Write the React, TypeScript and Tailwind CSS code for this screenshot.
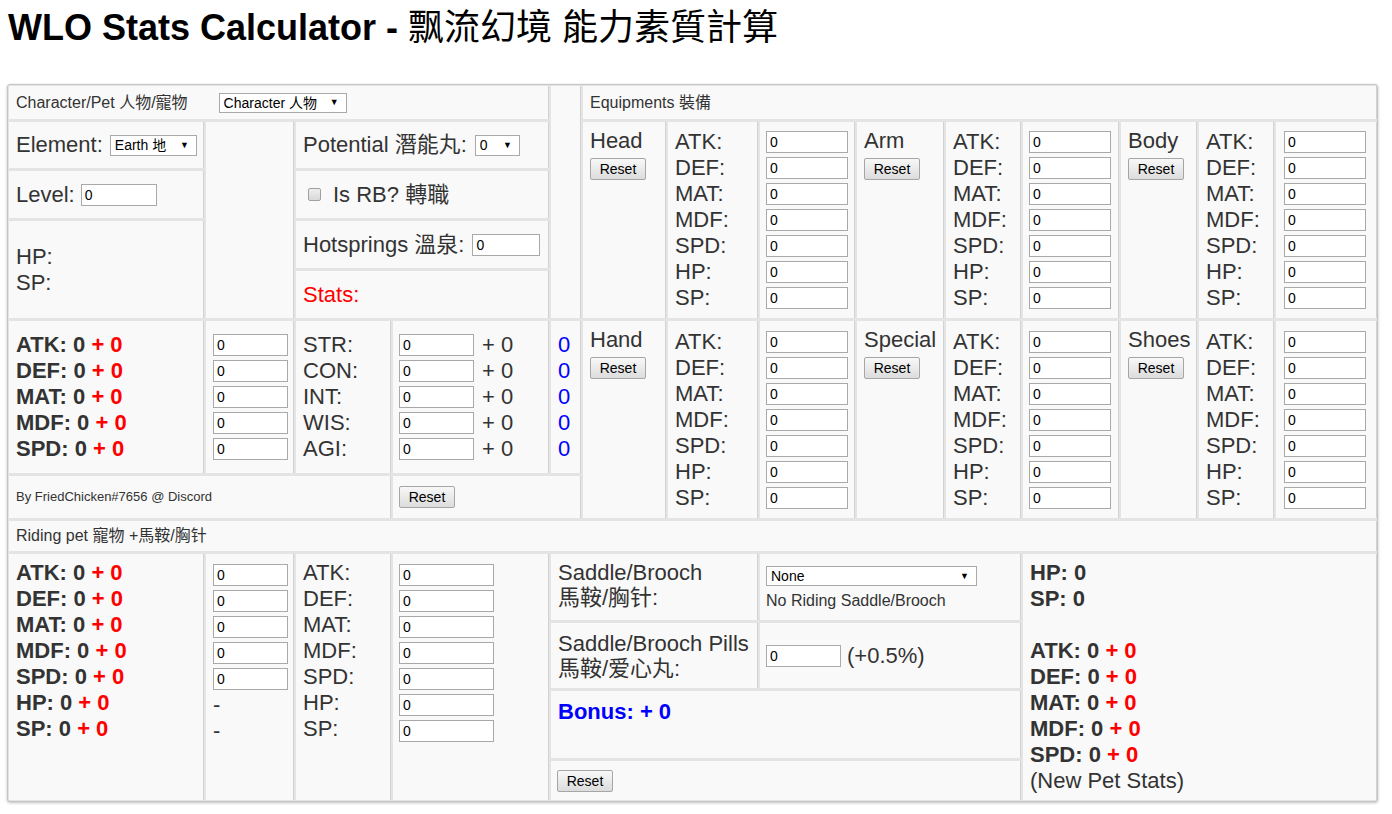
import React from "react";

const STATS5 = ["ATK", "DEF", "MAT", "MDF", "SPD"];
const STATS7 = ["ATK", "DEF", "MAT", "MDF", "SPD", "HP", "SP"];
const ATTRS = ["STR", "CON", "INT", "WIS", "AGI"];

// every table cell shares the same light fill and the darker right edge
const cell = "bg-[#f9f9f9] shadow-[1px_0_0_#d2d2d2]";

function Field({ w = "w-[75px]" }: { w?: string }) {
  return (
    <input
      readOnly
      value="0"
      className={`${w} h-[22px] border border-[#a9a9a9] bg-white px-[3px] text-[14px] leading-[20px] text-black outline-none`}
    />
  );
}

function Dropdown({ text, w, h = "h-[21px]" }: { text: string; w: string; h?: string }) {
  return (
    <span
      className={`${w} ${h} inline-flex items-center justify-between border border-[#a9a9a9] bg-white pl-[4px] pr-[7px] text-[14px] leading-none text-black`}
    >
      <span>{text}</span>
      <span className="text-[9px]">▼</span>
    </span>
  );
}

function ResetButton() {
  return (
    <button className="h-[22px] w-[56px] rounded-[2px] border border-[#a6a6a6] bg-linear-to-b from-[#f8f8f8] to-[#dcdcdc] text-[14px] leading-none text-black">
      Reset
    </button>
  );
}

function BoldStat({ name }: { name: string }) {
  return (
    <div className="h-[26px] font-bold">
      {name}: 0 <span className="text-[#ff0000]">+ 0</span>
    </div>
  );
}

function Equip({
  name,
  a,
  b,
  c,
  pad,
}: {
  name: string;
  a: string;
  b: string;
  c: string;
  pad: string;
}) {
  return (
    <>
      <div className={`${cell} ${a} px-[7px] pt-[6px]`}>
        <div className="leading-[26px]">{name}</div>
        <div className="mt-[4px] flex">
          <ResetButton />
        </div>
      </div>
      <div className={`${cell} ${b} flex flex-col justify-center pl-[7px] leading-[26px]`}>
        {STATS7.map((s) => (
          <div key={s}>{s}:</div>
        ))}
      </div>
      <div className={`${cell} ${c} flex flex-col justify-center ${pad}`}>
        {STATS7.map((s) => (
          <div key={s} className="flex h-[26px] items-center">
            <Field w="w-[82px]" />
          </div>
        ))}
      </div>
    </>
  );
}

export default function App() {
  return (
    <div className="min-h-screen bg-white font-['Liberation_Sans','Noto_Sans_CJK_TC',sans-serif] text-[22px] leading-[26px] text-[#333]">
      <h1 className="m-0 px-[8px] pt-[7px] pb-[36px] text-[36px] leading-[41px] font-bold text-black">
        WLO Stats Calculator - <span className="font-normal">飘流幻境 能力素質計算</span>
      </h1>

      <div className="ml-[7px] flex w-[1371px] flex-col gap-[3px] rounded-[3px] border border-[#c6c6c6] bg-[#e4e4e4] p-px shadow-[0_1px_3px_rgba(0,0,0,0.25)]">
        {/* Character + Equipments */}
        <div className="grid grid-cols-[194px_87px_94px_155px_29px_82px_89px_94px_86px_74px_95px_75px_74px_100px] grid-rows-[33px_46px_47px_47px_47px_152px_42px] gap-[3px]">
          <div className={`${cell} col-span-4 col-start-1 row-start-1 flex items-center px-[7px] text-[16px]`}>
            Character/Pet 人物/寵物
            <span className="ml-[31px] flex">
              <Dropdown text="Character 人物" w="w-[128px]" h="h-[20px]" />
            </span>
          </div>
          <div className={`${cell} col-start-5 row-span-5 row-start-1`} />
          <div className={`${cell} col-span-9 col-start-6 row-start-1 flex items-center px-[7px] text-[16px]`}>
            Equipments 裝備
          </div>

          <div className={`${cell} col-start-1 row-start-2 flex items-center px-[7px]`}>
            Element:
            <span className="ml-[7px] flex">
              <Dropdown text="Earth 地" w="w-[87px]" />
            </span>
          </div>
          <div className={`${cell} col-start-2 row-span-4 row-start-2`} />
          <div className={`${cell} col-span-2 col-start-3 row-start-2 flex items-center px-[7px]`}>
            Potential 潛能丸:
            <span className="ml-[8px] flex">
              <Dropdown text="0" w="w-[45px]" />
            </span>
          </div>

          <div className={`${cell} col-start-1 row-start-3 flex items-center px-[7px]`}>
            Level:
            <span className="ml-[6px] flex">
              <Field w="w-[76px]" />
            </span>
          </div>
          <div className={`${cell} col-span-2 col-start-3 row-start-3 flex items-center px-[12px]`}>
            <span className="h-[13px] w-[13px] rounded-[2px] border border-[#a0a0a0] bg-linear-to-b from-[#eeeeee] to-[#d9d9d9]" />
            <span className="ml-[12px]">Is RB? 轉職</span>
          </div>

          <div className={`${cell} col-start-1 row-span-2 row-start-4 flex flex-col justify-center px-[7px]`}>
            <div>HP:</div>
            <div>SP:</div>
          </div>
          <div className={`${cell} col-span-2 col-start-3 row-start-4 flex items-center px-[7px]`}>
            Hotsprings 溫泉:
            <span className="ml-[8px] flex">
              <Field w="w-[68px]" />
            </span>
          </div>
          <div className={`${cell} col-span-2 col-start-3 row-start-5 flex items-center px-[7px] text-[#ff0000]`}>
            Stats:
          </div>

          <Equip
            name="Head"
            a="col-start-6 row-start-2 row-span-4"
            b="col-start-7 row-start-2 row-span-4"
            c="col-start-8 row-start-2 row-span-4"
            pad="pl-[6px]"
          />
          <Equip
            name="Arm"
            a="col-start-9 row-start-2 row-span-4"
            b="col-start-10 row-start-2 row-span-4"
            c="col-start-11 row-start-2 row-span-4"
            pad="pl-[6px]"
          />
          <Equip
            name="Body"
            a="col-start-12 row-start-2 row-span-4"
            b="col-start-13 row-start-2 row-span-4"
            c="col-start-14 row-start-2 row-span-4"
            pad="pl-[8px]"
          />

          <div className={`${cell} col-start-1 row-start-6 flex flex-col justify-center px-[7px]`}>
            {STATS5.map((s) => (
              <BoldStat key={s} name={s} />
            ))}
          </div>
          <div className={`${cell} col-start-2 row-start-6 flex flex-col justify-center px-[7px]`}>
            {STATS5.map((s) => (
              <div key={s} className="flex h-[26px] items-center">
                <Field />
              </div>
            ))}
          </div>
          <div className={`${cell} col-start-3 row-start-6 flex flex-col justify-center px-[7px]`}>
            {ATTRS.map((s) => (
              <div key={s}>{s}:</div>
            ))}
          </div>
          <div className={`${cell} col-start-4 row-start-6 flex flex-col justify-center pl-[6px]`}>
            {ATTRS.map((s) => (
              <div key={s} className="flex h-[26px] items-center">
                <Field />
                <span className="ml-[8px]">+ 0</span>
              </div>
            ))}
          </div>
          <div className={`${cell} col-start-5 row-start-6 flex flex-col justify-center pl-[7px] text-[#0000ff]`}>
            {ATTRS.map((s) => (
              <div key={s}>0</div>
            ))}
          </div>

          <div className={`${cell} col-span-3 col-start-1 row-start-7 flex items-center px-[7px] text-[13px]`}>
            By FriedChicken#7656 @ Discord
          </div>
          <div className={`${cell} col-span-2 col-start-4 row-start-7 flex items-center pl-[6px]`}>
            <ResetButton />
          </div>

          <Equip
            name="Hand"
            a="col-start-6 row-start-6 row-span-2"
            b="col-start-7 row-start-6 row-span-2"
            c="col-start-8 row-start-6 row-span-2"
            pad="pl-[6px]"
          />
          <Equip
            name="Special"
            a="col-start-9 row-start-6 row-span-2"
            b="col-start-10 row-start-6 row-span-2"
            c="col-start-11 row-start-6 row-span-2"
            pad="pl-[6px]"
          />
          <Equip
            name="Shoes"
            a="col-start-12 row-start-6 row-span-2"
            b="col-start-13 row-start-6 row-span-2"
            c="col-start-14 row-start-6 row-span-2"
            pad="pl-[8px]"
          />
        </div>

        {/* Riding pet */}
        <div className={`${cell} flex h-[30px] items-center px-[7px] text-[16px]`}>Riding pet 寵物 +馬鞍/胸针</div>

        <div className="grid grid-cols-[194px_87px_94px_155px_206px_260px_353px] grid-rows-[66px_65px_67px_39px] gap-[3px]">
          <div className={`${cell} col-start-1 row-span-4 row-start-1 px-[7px] pt-[6px]`}>
            {STATS7.map((s) => (
              <BoldStat key={s} name={s} />
            ))}
          </div>
          <div className={`${cell} col-start-2 row-span-4 row-start-1 px-[7px] pt-[8px]`}>
            {STATS5.map((s) => (
              <div key={s} className="flex h-[26px] items-center">
                <Field />
              </div>
            ))}
            <div className="h-[26px]">-</div>
            <div className="h-[26px]">-</div>
          </div>
          <div className={`${cell} col-start-3 row-span-4 row-start-1 px-[7px] pt-[6px]`}>
            {STATS7.map((s) => (
              <div key={s}>{s}:</div>
            ))}
          </div>
          <div className={`${cell} col-start-4 row-span-4 row-start-1 pl-[6px] pt-[8px]`}>
            {STATS7.map((s) => (
              <div key={s} className="flex h-[26px] items-center">
                <Field w="w-[95px]" />
              </div>
            ))}
          </div>

          <div className={`${cell} col-start-5 row-start-1 px-[7px] pt-[6px] leading-[25px]`}>
            <div>Saddle/Brooch</div>
            <div>馬鞍/胸针:</div>
          </div>
          <div className={`${cell} col-start-6 row-start-1 flex flex-col items-start pl-[6px] pt-[12px]`}>
            <Dropdown text="None" w="w-[211px]" h="h-[20px]" />
            <div className="mt-[6px] text-[16px] leading-[18px]">No Riding Saddle/Brooch</div>
          </div>
          <div className={`${cell} col-start-7 row-span-4 row-start-1 px-[7px] pt-[6px]`}>
            <div className="font-bold">HP: 0</div>
            <div className="font-bold">SP: 0</div>
            <div className="h-[26px]" />
            {STATS5.map((s) => (
              <BoldStat key={s} name={s} />
            ))}
            <div>(New Pet Stats)</div>
          </div>

          <div className={`${cell} col-start-5 row-start-2 flex flex-col justify-center px-[7px] leading-[25px]`}>
            <div>Saddle/Brooch Pills</div>
            <div>馬鞍/爱心丸:</div>
          </div>
          <div className={`${cell} col-start-6 row-start-2 flex items-center pl-[6px]`}>
            <Field />
            <span className="ml-[6px]">(+0.5%)</span>
          </div>

          <div className={`${cell} col-span-2 col-start-5 row-start-3 px-[7px] pt-[8px] font-bold text-[#0000ff]`}>
            Bonus: + 0
          </div>
          <div className={`${cell} col-span-2 col-start-5 row-start-4 flex items-center pl-[6px]`}>
            <ResetButton />
          </div>
        </div>
      </div>
    </div>
  );
}
